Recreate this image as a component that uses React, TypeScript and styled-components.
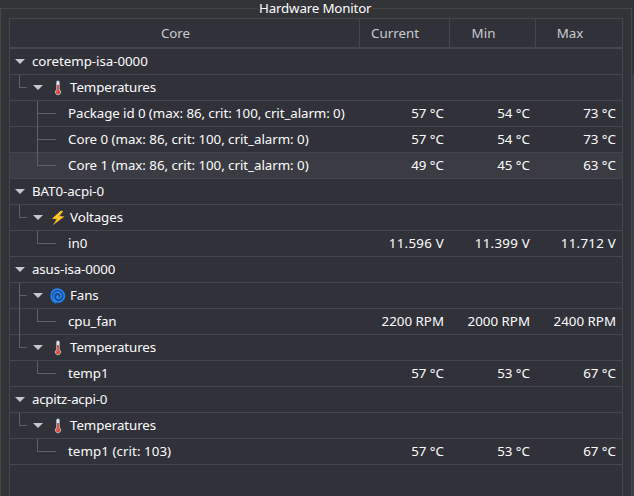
import React from "react";
import styled, { createGlobalStyle } from "styled-components";

const GlobalStyle = createGlobalStyle`
  * { box-sizing: border-box; }
  html, body { margin: 0; height: 100%; background: #333438; overflow: hidden; }
  body { font-family: "Noto Sans", sans-serif; font-size: 13.33px; color: #fcfcfc; }
`;

const LINE = "#45464c";
const TREE = "#5f6065";

const Page = styled.div`
  display: flex;
  width: 634px;
  height: 496px;
  padding-top: 8px;
  overflow: hidden;
`;

const Group = styled.section`
  position: relative;
  flex: none;
  width: 632px;
  height: 500px;
  padding: 9px 8px 0;
  border: 1px solid ${LINE};
`;

const Title = styled.h1`
  position: absolute;
  top: -10px;
  left: 257px;
  margin: 0;
  padding: 0 1px;
  font-size: inherit;
  font-weight: 400;
  line-height: 18px;
  letter-spacing: -0.17px;
  white-space: nowrap;
  background: #333438;
`;

const Edge = styled.div`
  width: 2px;
  height: 440px;
  margin-top: 66px;
  background: #3d3e43;
`;

const Table = styled.div`
  height: 490px;
  border: 1px solid ${LINE};
  background: #31313a;
`;

const Header = styled.div`
  display: grid;
  grid-template-columns: 350px 90px 86px 86px;
  height: 30px;
  border-bottom: 2px solid ${LINE};
  color: #c9cacc;
`;

const HeadCell = styled.div<{ $shift: number }>`
  display: flex;
  justify-content: center;
  padding-right: ${(p) => p.$shift}px;
  border-right: 1px solid ${LINE};
  line-height: 29px;
  &:last-child { border-right: 0; }
`;

const Row = styled.div<{ $hover?: boolean }>`
  display: grid;
  grid-template-columns: 350px 90px 86px 86px;
  height: 26px;
  border-bottom: 1px solid ${LINE};
  background: ${(p) => (p.$hover ? "#3b3c43" : "transparent")};
`;

const NameCell = styled.div`
  display: flex;
  height: 26px;
`;

const Label = styled.span<{ $pad: number; $spacing: number }>`
  padding-left: ${(p) => p.$pad}px;
  line-height: 25px;
  letter-spacing: ${(p) => p.$spacing}px;
  white-space: pre;
`;

const Value = styled.span<{ $wide: boolean }>`
  padding-right: 6px;
  text-align: right;
  line-height: 25px;
  letter-spacing: ${(p) => (p.$wide ? 0.25 : 0)}px;
  white-space: nowrap;
`;

const Slot = styled.svg`
  display: block;
  flex: none;
`;

const IconBox = styled.svg`
  display: block;
  flex: none;
  width: 16px;
  height: 16px;
  margin: 5px 4px 0 0;
`;

type Branch = "blank" | "mid" | "end" | "through";

/* Connector of one indentation level: the vertical guide and its arm. */
const Guide = ({ kind, arm }: { kind: Branch; arm: number }) => (
  <Slot width={18} height={26} overflow="visible" shapeRendering="crispEdges" fill={TREE}>
    {kind !== "blank" && <rect x={9} y={0} width={1} height={kind === "end" ? 13 : 26} />}
    {(kind === "mid" || kind === "end") && <rect x={9} y={12} width={arm} height={1} />}
  </Slot>
);

const Arrow = () => (
  <Slot width={22} height={26}>
    <path d="M5 10H15L10 15Z" fill="#c8c8ca" />
  </Slot>
);

const Thermometer = () => (
  <IconBox viewBox="0 0 16 16">
    <path d="M6.2 2.2a1.8 1.8 0 0 1 3.6 0v7.5a3 3 0 1 1-3.6 0Z" fill="#a9c2cb" />
    <path d="M7 2.3a1 1 0 0 1 2 0v8H7Z" fill="#dce8ec" />
    <path d="M7.1 5h1.8v5.3a2.1 2.1 0 1 1-1.8 0Z" fill="#e34235" />
    <path d="M9.3 3h.9M9.3 5h.9M9.3 7h.9" stroke="#53666e" strokeWidth=".5" />
    <circle cx="7.3" cy="11.7" r=".6" fill="#ff8c78" />
  </IconBox>
);

const Bolt = () => (
  <IconBox viewBox="0 0 16 16">
    <path d="M11 .8 1.9 8.7l4.7.5-3.8 6 11.7-8.8-4.8-.5 3.5-5Z" fill="#fcb414" />
    <path d="M11 .8 3.4 7.8l5 .3-2.9 4.7 6.3-5.7-4.6-.4 4.5-5.8Z" fill="#fdd039" />
  </IconBox>
);

const Cyclone = () => (
  <IconBox viewBox="0 0 16 16">
    <circle cx="8" cy="8" r="7" fill="#1b4685" />
    <path
      d="M8.3 8.2C7.2 7.2 6 9.4 7.7 10.2c2 .9 4.2-1.2 3.5-3.4C10.4 4.2 7 3.4 4.9 5.2 2.5 7.3 2.8 11 5.3 12.8c3 2.1 7.1.8 8.5-2.4 1.5-3.6-.4-7.7-4-8.8C6.6.7 3.3 1.9 1.7 4.6"
      fill="none"
      stroke="#2386f0"
      strokeWidth="1.75"
      strokeLinecap="round"
    />
    <path d="M1.5 5.5C.2 9.5 2 13.4 5.8 14.8" fill="none" stroke="#2386f0" strokeWidth="1.4" strokeLinecap="round" />
  </IconBox>
);

const icons = { temp: Thermometer, volt: Bolt, fan: Cyclone };

type Item = {
  name: string;
  level: 0 | 1 | 2;
  icon?: keyof typeof icons;
  outer?: Branch;
  inner?: Branch;
  values?: string[];
  hover?: boolean;
  spacing?: number;
};

const items: Item[] = [
  { name: "coretemp-isa-0000", level: 0, spacing: -0.05 },
  { name: "Temperatures", level: 1, icon: "temp", outer: "end", spacing: -0.08 },
  { name: "Package id 0 (max: 86, crit: 100, crit_alarm: 0)", level: 2, inner: "mid", values: ["57 °C", "54 °C", "73 °C"], spacing: -0.08 },
  { name: "Core 0 (max: 86, crit: 100, crit_alarm: 0)", level: 2, inner: "mid", values: ["57 °C", "54 °C", "73 °C"], spacing: -0.04 },
  { name: "Core 1 (max: 86, crit: 100, crit_alarm: 0)", level: 2, inner: "end", values: ["49 °C", "45 °C", "63 °C"], hover: true, spacing: -0.04 },
  { name: "BAT0-acpi-0", level: 0, spacing: -0.08 },
  { name: "Voltages", level: 1, icon: "volt", outer: "end", spacing: -0.08 },
  { name: "in0", level: 2, inner: "end", values: ["11.596 V", "11.399 V", "11.712 V"] },
  { name: "asus-isa-0000", level: 0, spacing: -0.12 },
  { name: "Fans", level: 1, icon: "fan", outer: "mid", spacing: -0.1 },
  { name: "cpu_fan", level: 2, outer: "through", inner: "end", values: ["2200 RPM", "2000 RPM", "2400 RPM"], spacing: -0.08 },
  { name: "Temperatures", level: 1, icon: "temp", outer: "end", spacing: -0.08 },
  { name: "temp1", level: 2, inner: "end", values: ["57 °C", "53 °C", "67 °C"] },
  { name: "acpitz-acpi-0", level: 0, spacing: -0.25 },
  { name: "Temperatures", level: 1, icon: "temp", outer: "end", spacing: -0.08 },
  { name: "temp1 (crit: 103)", level: 2, inner: "end", values: ["57 °C", "53 °C", "67 °C"], spacing: 0.06 },
];

const TreeRow = ({ item }: { item: Item }) => {
  const Icon = item.icon && icons[item.icon];
  return (
    <Row $hover={item.hover}>
      <NameCell>
        {item.level > 0 && <Guide kind={item.outer ?? "blank"} arm={8} />}
        {item.level === 2 && <Guide kind={item.inner ?? "blank"} arm={19} />}
        {item.level < 2 && <Arrow />}
        {Icon && <Icon />}
        <Label $pad={item.level === 2 ? 22 : 0} $spacing={item.spacing ?? 0}>
          {item.name}
        </Label>
      </NameCell>
      {item.values?.map((v, i) => (
        <Value key={i} $wide={v.endsWith(" V")}>{v}</Value>
      ))}
    </Row>
  );
};

export default function App() {
  return (
    <>
      <GlobalStyle />
      <Page>
        <Group>
          <Title>Hardware Monitor</Title>
          <Table>
            <Header>
              <HeadCell $shift={18}>Core</HeadCell>
              <HeadCell $shift={19}>Current</HeadCell>
              <HeadCell $shift={18}>Min</HeadCell>
              <HeadCell $shift={18}>Max</HeadCell>
            </Header>
            {items.map((item, i) => <TreeRow key={i} item={item} />)}
          </Table>
        </Group>
        <Edge />
      </Page>
    </>
  );
}
